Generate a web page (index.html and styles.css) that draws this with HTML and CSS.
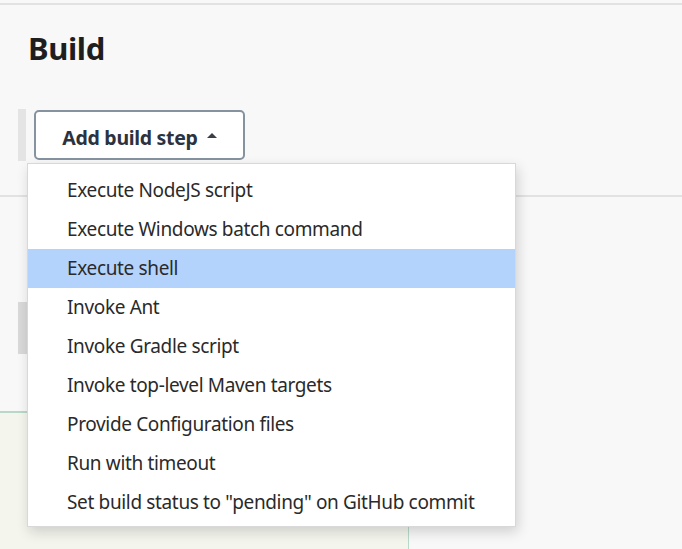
FILE: index.html
```html
<!DOCTYPE html>
<html>
<head>
<meta charset="utf-8">
<link rel="stylesheet" href="styles.css">
</head>
<body>
<div class="page">
  <div class="topline"></div>
  <h1 class="title">Build</h1>
  <div class="step-row">
    <div class="handle"></div>
    <button class="add-btn">Add build step <span class="caret"></span></button>
  </div>
  <div class="rule"></div>
  <div class="section2">
    <div class="handle2"></div>
  </div>
  <div class="green-box"></div>

  <ul class="menu">
    <li>Execute NodeJS script</li>
    <li>Execute Windows batch command</li>
    <li class="active">Execute shell</li>
    <li>Invoke Ant</li>
    <li>Invoke Gradle script</li>
    <li>Invoke top-level Maven targets</li>
    <li>Provide Configuration files</li>
    <li>Run with timeout</li>
    <li>Set build status to "pending" on GitHub commit</li>
  </ul>
</div>
</body>
</html>
```
FILE: styles.css
```css
html, body {
  margin: 0;
  padding: 0;
  background: #f8f8f8;
  font-family: "Noto Sans", "Open Sans", sans-serif;
  color: #222;
}
.page {
  position: relative;
  width: 682px;
  height: 549px;
  overflow: hidden;
}
.topline {
  margin-top: 3px;
  height: 2px;
  background: #e2e2e2;
}
.title {
  margin: 0;
  padding: 25px 0 0 28px;
  height: 53px;
  box-sizing: content-box;
  font-size: 31px;
  line-height: 36px;
  font-weight: 700;
  color: #1e1e1e;
  letter-spacing: -0.4px;
}
.step-row {
  display: flex;
  align-items: flex-start;
  gap: 8px;
  padding-left: 18px;
  margin-top: 26px;
}
.handle {
  width: 8px;
  height: 52px;
  background: #e4e4e4;
}
.add-btn {
  margin-top: 1px;
  width: 211px;
  height: 50px;
  box-sizing: border-box;
  border: 2px solid #8592a0;
  border-radius: 5px;
  background: #fff;
  font-family: "Noto Sans", "Open Sans", sans-serif;
  font-weight: 700;
  font-size: 19.5px;
  color: #2c3340;
  letter-spacing: -0.3px;
  display: flex;
  align-items: center;
  justify-content: center;
  gap: 9px;
  padding: 4px 0 0 0;
}
.caret {
  width: 0;
  height: 0;
  border-left: 5px solid transparent;
  border-right: 5px solid transparent;
  border-bottom: 5px solid #3a3f47;
  margin-bottom: 3px;
}
.rule {
  margin-top: 34px;
  height: 2px;
  background: #e2e2e2;
}
.section2 {
  height: 214px;
  padding-left: 18px;
  padding-top: 105px;
  box-sizing: border-box;
}
.handle2 {
  width: 9px;
  height: 52px;
  background: #d9d9d9;
}
.green-box {
  width: 408px;
  height: 200px;
  border-top: 2px solid #b9d8c8;
  border-right: 1px solid #b9d8c8;
  background: #f4f6ee;
}
.menu {
  position: absolute;
  left: 27px;
  top: 163px;
  width: 489px;
  margin: 0;
  padding: 7px 0 4px;
  box-sizing: border-box;
  list-style: none;
  background: #fff;
  border: 1px solid #d8d8d8;
  box-shadow: 2px 5px 12px rgba(0, 0, 0, 0.16);
}
.menu li {
  height: 39px;
  line-height: 38px;
  padding-left: 39px;
  font-size: 19px;
  color: #2a2a2a;
  letter-spacing: -0.35px;
  white-space: nowrap;
}
.menu li.active {
  background: #b3d3fd;
}
```
